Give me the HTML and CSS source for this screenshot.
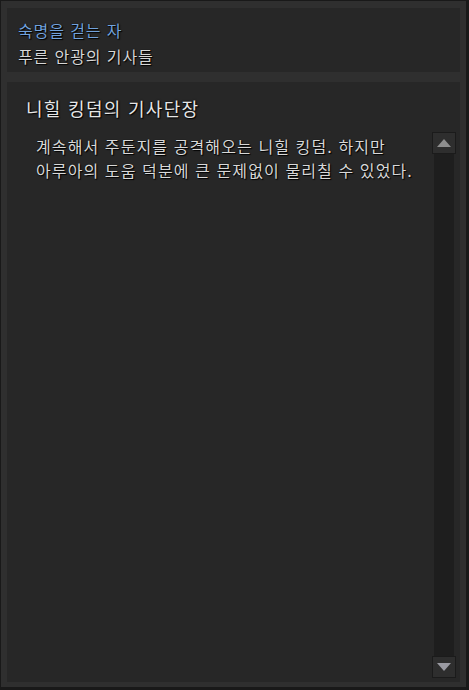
FILE: index.html
```html
<!DOCTYPE html>
<html lang="ko">
<head>
    <meta charset="UTF-8">
    <title>숙명을 걷는 자</title>
    <link rel="stylesheet" href="styles.css">
</head>
<body>
    <div class="frame">
        <div class="panel quest-head">
            <div class="quest-name">숙명을 걷는 자</div>
            <div class="quest-sub">푸른 안광의 기사들</div>
        </div>

        <div class="panel quest-body">
            <div class="quest-title">니힐 킹덤의 기사단장</div>
            <div class="quest-content">
                <div class="quest-text">
                    계속해서 주둔지를 공격해오는 니힐 킹덤. 하지만<br>
                    아루아의 도움 덕분에 큰 문제없이 물리칠 수 있었다.
                </div>
                <div class="scrollbar">
                    <div class="scroll-btn"><span class="arrow-up"></span></div>
                    <div class="scroll-track"></div>
                    <div class="scroll-btn"><span class="arrow-down"></span></div>
                </div>
            </div>
        </div>
    </div>
</body>
</html>
```

FILE: styles.css
```css
*{margin:0;padding:0;box-sizing:border-box}
body{background:#191919;font-family:"Noto Sans CJK KR","Noto Sans",sans-serif;width:469px;height:690px;overflow:hidden}
.frame{margin:1px 3px 3px 1px;height:686px;background:#2f2f2f;padding:7px 6px 5px 6px;display:flex;flex-direction:column;gap:10px}
.panel{background:#272727}
.quest-head{height:64px;padding:9px 11px 0}
.quest-name{font-size:16px;line-height:26px;letter-spacing:0.9px;color:#72a2dc;text-shadow:1px 1px 1px #000,0 0 1px #000}
.quest-sub{font-size:16px;line-height:26px;letter-spacing:0.9px;color:#d6d6d6;text-shadow:1px 1px 1px #000,0 0 1px #000}
.quest-body{flex:1;display:flex;flex-direction:column;padding:0 4px 4px 0}
.quest-title{height:50px;padding:14px 0 0 19px;font-size:18px;line-height:24px;letter-spacing:1.3px;color:#e6e6e6;text-shadow:1px 1px 1px #000,0 0 2px #000}
.quest-content{flex:1;display:flex}
.quest-text{flex:1;padding:2px 0 0 29px;font-size:16px;line-height:24px;letter-spacing:1.1px;color:#d8d8d8;text-shadow:1px 1px 1px #000,0 0 1px #000}
.scrollbar{width:24px;display:flex;flex-direction:column;align-items:center}
.scroll-btn{width:24px;height:22px;background:#2e2e2e;border:1px solid #1b1b1b;display:flex;align-items:center;justify-content:center}
.scroll-track{flex:1;width:20px;background:#1e1e1e}
.arrow-up{width:0;height:0;border-left:7px solid transparent;border-right:7px solid transparent;border-bottom:8px solid #8e8e8e}
.arrow-down{width:0;height:0;border-left:7px solid transparent;border-right:7px solid transparent;border-top:8px solid #9a9aa2}
```
